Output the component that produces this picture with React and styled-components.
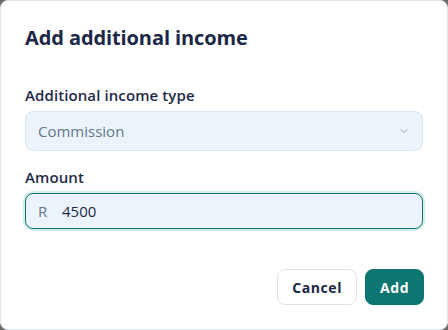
import React, { useState } from "react";
import styled, { createGlobalStyle } from "styled-components";

const GlobalStyle = createGlobalStyle`
  html, body {
    margin: 0;
    padding: 0;
    background: #6b6b6b;
  }
  * { box-sizing: border-box; }
  body {
    font-family: "Open Sans", "Noto Sans", sans-serif;
  }
`;

function ChevronDown() {
  return (
    <svg width="12" height="12" viewBox="0 0 24 24" fill="none" stroke="#94a3b8" strokeWidth="2" strokeLinecap="round" strokeLinejoin="round">
      <path d="M6 9l6 6 6-6" />
    </svg>
  );
}

export default function App() {
  const [amount, setAmount] = useState("4500");
  return (
    <>
      <GlobalStyle />
      <Dialog>
        <Title>Add additional income</Title>
        <Field>
          <Label>Additional income type</Label>
          <Select>
            <span>Commission</span>
            <ChevronDown />
          </Select>
        </Field>
        <Field>
          <Label>Amount</Label>
          <InputBox>
            <Prefix>R</Prefix>
            <Input value={amount} onChange={(e) => setAmount(e.target.value)} />
          </InputBox>
        </Field>
        <Footer>
          <Button>Cancel</Button>
          <Button primary>Add</Button>
        </Footer>
      </Dialog>
    </>
  );
}

const Dialog = styled.div`
  width: 448px;
  height: 330px;
  background: #fff;
  border: 1px solid #e2e8f0;
  border-radius: 8px;
  padding: 24px 24px 24px 24px;
  display: flex;
  flex-direction: column;
`;
const Title = styled.h2`
  margin: 0 0 32px;
  font-size: 20px;
  line-height: 28px;
  font-weight: 700;
  color: #1b2745;
  letter-spacing: -0.1px;
  position: relative;
  top: -1px;
`;
const Field = styled.div`
  display: flex;
  flex-direction: column;
  gap: 6px;
  margin-bottom: 16px;
`;
const Label = styled.label`
  font-size: 15px;
  line-height: 20px;
  font-weight: 600;
  color: #1f2a47;
  letter-spacing: 0.1px;
`;
const Select = styled.div`
  height: 40px;
  display: flex;
  align-items: center;
  justify-content: space-between;
  padding: 0 12px;
  background: #ecf4fb;
  border: 1px solid #d9e6f0;
  border-radius: 8px;
  font-size: 15px;
  color: #64748b;
`;
const InputBox = styled.div`
  height: 36px;
  display: flex;
  align-items: center;
  padding: 0 12px;
  background: #ecf4fb;
  border: 1.5px solid #0f766e;
  border-radius: 8px;
  box-shadow: 0 0 0 2px #d5eeec;
`;
const Prefix = styled.span`
  font-size: 15px;
  color: #64748b;
  width: 24px;
`;
const Input = styled.input`
  flex: 1;
  border: none;
  outline: none;
  background: transparent;
  font-family: inherit;
  font-size: 15px;
  color: #1b2745;
  padding: 0;
`;
const Footer = styled.div`
  margin-top: auto;
  margin-right: -1px;
  display: flex;
  justify-content: flex-end;
  gap: 8px;
`;
const Button = styled.button`
  height: 36px;
  padding: 0 14px;
  border-radius: 8px;
  font-family: inherit;
  font-size: 14px;
  font-weight: 700;
  letter-spacing: ${(p) => (p.primary ? "0.5px" : "0.6px")};
  cursor: pointer;
  border: 1px solid ${(p) => (p.primary ? "#0e7670" : "#dbe4ec")};
  background: ${(p) => (p.primary ? "#0e7670" : "#fff")};
  color: ${(p) => (p.primary ? "#fff" : "#1b2745")};
`;
